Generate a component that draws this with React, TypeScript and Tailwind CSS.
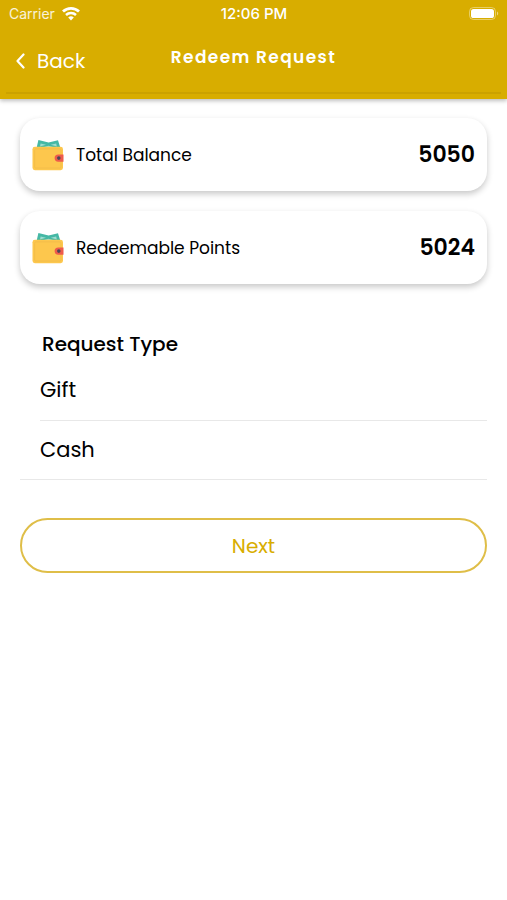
import React from "react";

function WifiIcon() {
  return (
    <svg viewBox="0 0 18 14" className="h-[14px] w-[18px]" fill="none" stroke="#fff" aria-hidden="true">
      <path d="M1 4.6a11.6 11.6 0 0 1 16 0" strokeWidth="2.8" />
      <path d="M4 8a7.3 7.3 0 0 1 10 0" strokeWidth="2.5" />
      <path d="M9 13.4 6.2 10.5a4 4 0 0 1 5.6 0Z" fill="#fff" stroke="none" />
    </svg>
  );
}

function BatteryIcon() {
  return (
    <svg viewBox="0 0 30 14" className="h-[14px] w-[30px]" aria-hidden="true">
      <rect x="0.5" y="0.5" width="26" height="12" rx="4" fill="none" stroke="#fff" strokeOpacity="0.4" />
      <rect x="2" y="2" width="23" height="9" rx="2.6" fill="#fff" />
      <path d="M28 4.6v4c1.6-.7 1.6-3.3 0-4Z" fill="#fff" fillOpacity="0.5" />
    </svg>
  );
}

function WalletIcon() {
  return (
    <svg viewBox="0 0 32 32" className="h-8 w-8 shrink-0" aria-hidden="true">
      <path d="M4.6 9 6.4 1l10.2 2.4L26 1.2 28.4 9Z" fill="#45b8a5" />
      <path d="m8.6 4.4 5.4 1.4-6 1.6Zm15.6 0-5.4 1.4 6 1.6ZM12 8l4.5-1.2L21 8Z" fill="#9fdccf" />
      <rect x="0.5" y="7.8" width="30.5" height="23.4" rx="2.4" fill="#fdc74d" />
      <rect x="2.6" y="9.9" width="26.4" height="19.2" rx="1.2" fill="none" stroke="#f2bc49" strokeWidth="0.9" />
      <path d="M31.5 15.4h-5.2a3.7 3.7 0 0 0 0 7.4h5.2Z" fill="#ee5b4c" />
      <circle cx="26.8" cy="19.1" r="1.8" fill="#4b4755" />
    </svg>
  );
}

function BalanceCard({ label, value }: { label: string; value: string }) {
  return (
    <div className="flex h-[73px] items-center gap-3 rounded-[20px] bg-white px-3 shadow-[0_3px_6px_rgba(0,0,0,0.22)]">
      <WalletIcon />
      <span className="text-[17px] leading-6">{label}</span>
      <strong className="ml-auto text-[22px] leading-7 font-semibold">{value}</strong>
    </div>
  );
}

export default function App() {
  return (
    <div className="min-h-screen bg-white font-['Poppins','Inter',sans-serif] text-black">
      <header className="bg-[#d8ad00] pb-[5px] text-white shadow-[0_2px_4px_rgba(0,0,0,0.25)]">
        <div className="grid h-7 grid-cols-3 items-center pr-2 pl-[9px] font-['Inter',sans-serif] text-[14px] leading-5">
          <div className="flex items-center gap-[7px]">
            <span className="text-white/85">Carrier</span>
            <WifiIcon />
          </div>
          <time className="text-center text-[15px] font-medium">12:06 PM</time>
          <div className="flex justify-end">
            <BatteryIcon />
          </div>
        </div>
        <div className="mx-[6px] grid h-[66px] grid-cols-[1fr_auto_1fr] items-start border-b-2 border-[#cba200]">
          <button type="button" className="flex items-center gap-3 justify-self-start pt-[19px] pl-[10px] text-[20px] leading-7">
            <svg viewBox="0 0 9 16" className="h-4 w-[9px]" fill="none" stroke="currentColor" strokeWidth="2.2" strokeLinecap="round" strokeLinejoin="round" aria-hidden="true">
              <path d="M7.5 1.5 1.5 8l6 6.5" />
            </svg>
            Back
          </button>
          <h1 className="pt-[17px] text-[17px] leading-6 font-semibold tracking-[0.08em]">Redeem Request</h1>
        </div>
      </header>

      <main className="px-5 pt-[19px]">
        <div className="flex flex-col gap-5">
          <BalanceCard label="Total Balance" value="5050" />
          <BalanceCard label="Redeemable Points" value="5024" />
        </div>

        <section className="mt-11" aria-labelledby="request-type">
          <h2 id="request-type" className="pl-[22px] text-[20px] leading-8 font-medium">
            Request Type
          </h2>
          <ul className="border-b border-[#e8e8e8] text-[21px] leading-7">
            <li className="ml-5 border-b border-[#e8e8e8]">
              <button type="button" className="flex h-[60px] w-full items-center text-left">Gift</button>
            </li>
            <li className="ml-5">
              <button type="button" className="flex h-[58px] w-full items-center text-left">Cash</button>
            </li>
          </ul>
        </section>

        <button
          type="button"
          className="mt-[38px] h-[55px] w-full rounded-full border-2 border-[#dfbe48] text-[20px] leading-7 text-[#d8ad00]"
        >
          Next
        </button>
      </main>
    </div>
  );
}
